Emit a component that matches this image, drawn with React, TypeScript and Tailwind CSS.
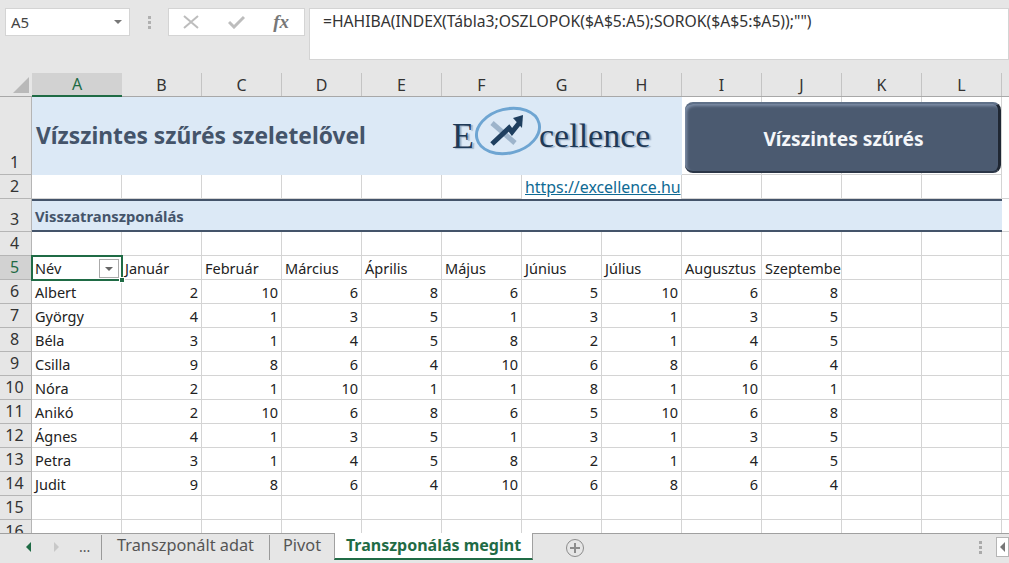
const columns = ["A", "B", "C", "D", "E", "F", "G", "H", "I", "J", "K", "L"];
const months = ["Január", "Február", "Március", "Április", "Május", "Június", "Július", "Augusztus", "Szeptember"];

const people: [string, number[]][] = [
  ["Albert", [2, 10, 6, 8, 6, 5, 10, 6, 8]],
  ["György", [4, 1, 3, 5, 1, 3, 1, 3, 5]],
  ["Béla", [3, 1, 4, 5, 8, 2, 1, 4, 5]],
  ["Csilla", [9, 8, 6, 4, 10, 6, 8, 6, 4]],
  ["Nóra", [2, 1, 10, 1, 1, 8, 1, 10, 1]],
  ["Anikó", [2, 10, 6, 8, 6, 5, 10, 6, 8]],
  ["Ágnes", [4, 1, 3, 5, 1, 3, 1, 3, 5]],
  ["Petra", [3, 1, 4, 5, 8, 2, 1, 4, 5]],
  ["Judit", [9, 8, 6, 4, 10, 6, 8, 6, 4]],
];

const RowHead = ({ n, active }: { n: number; active?: boolean }) => (
  <div
    className={`w-[32px] shrink-0 flex items-end justify-center pr-[2px] border-r border-b border-[#b5b5b5] text-[16px] leading-[23px] ${
      active ? "bg-[#d2d2d2] text-[#1f6b45]" : "bg-[#e6e6e6] text-[#333]"
    }`}
  >
    {n}
  </div>
);

const Cell = ({ w = "w-[80px]", children, right }: { w?: string; children?: React.ReactNode; right?: boolean }) => (
  <div
    className={`${w} shrink-0 h-full border-r border-b border-[#d4d4d4] px-[3px] flex items-end overflow-hidden whitespace-nowrap leading-[22px] ${
      right ? "justify-end" : ""
    }`}
  >
    {children}
  </div>
);

const EmptyRow = ({ n }: { n: number }) => (
  <div className="flex h-[24px]">
    <RowHead n={n} />
    {columns.map((c) => (
      <Cell key={c} w={c === "A" ? "w-[90px]" : "w-[80px]"} />
    ))}
    <Cell />
  </div>
);

const Logo = () => (
  <div className="relative w-[206px] h-[60px] shrink-0 font-['Liberation_Serif',serif] text-[#1f3a57] [text-shadow:2px_1px_1px_#9fb2c8]">
    <span className="absolute left-0 top-[8px] text-[36px] leading-[44px]">E</span>
    <svg className="absolute left-[22px] top-[-1px]" width="68" height="52" viewBox="0 0 68 52" fill="none">
      <ellipse cx="34" cy="26" rx="32" ry="22" transform="rotate(-14 34 26)" stroke="#6ea5d2" strokeWidth="3" />
      <path d="M18 18 L41 38" stroke="#9db4cb" strokeWidth="5" />
      <path d="M18 39 L35 23 L38 27 L46 17" stroke="#1f3f5f" strokeWidth="5" />
      <path d="M39 13 L49 10 L48 23 Z" fill="#1f3f5f" />
    </svg>
    <span className="absolute left-[87px] top-[8px] text-[34px] leading-[44px]">cellence</span>
  </div>
);

const App = () => {
  return (
    <div className="relative w-[1009px] h-[563px] overflow-hidden bg-white font-['Noto_Sans',sans-serif] text-[14.5px] text-[#222]">
      {/* Formula bar */}
      <div className="h-[73px] bg-[#e6e6e6] flex items-start pt-[8px] pl-[5px]">
        <div className="w-[125px] h-[28px] bg-white border border-[#d4d4d4] flex items-center justify-between pl-[5px] pr-[7px] text-[15px] text-[#444]">
          A5
          <span className="w-0 h-0 border-x-[4px] border-x-transparent border-t-[4px] border-t-[#777]" />
        </div>
        <div className="w-[38px] h-[28px] flex flex-col items-center justify-center gap-[2px]">
          <span className="w-[3px] h-[3px] bg-[#b0b0b0]" />
          <span className="w-[3px] h-[3px] bg-[#b0b0b0]" />
          <span className="w-[3px] h-[3px] bg-[#b0b0b0]" />
        </div>
        <div className="w-[137px] h-[28px] bg-white border border-[#d4d4d4] flex items-center justify-between pl-[14px] pr-[15px]">
          <svg width="16" height="14" viewBox="0 0 16 14" fill="none" stroke="#bdbdbd" strokeWidth="2">
            <path d="M1 1 L15 13 M15 1 L1 13" />
          </svg>
          <svg width="17" height="14" viewBox="0 0 17 14" fill="none" stroke="#bdbdbd" strokeWidth="3">
            <path d="M1 7 L6 12 L16 2" />
          </svg>
          <span className="font-['Liberation_Serif',serif] italic font-bold text-[19px] text-[#777]">fx</span>
        </div>
        <div className="ml-[4px] flex-1 h-[52px] bg-white border border-[#d4d4d4] pl-[13px] pt-[1px] text-[15.7px] text-[#333]">
          =HAHIBA(INDEX(Tábla3;OSZLOPOK($A$5:A5);SOROK($A$5:$A5));"")
        </div>
      </div>

      {/* Column headers */}
      <div className="flex h-[24px] bg-[#e6e6e6] border-b border-[#a8a8a8] text-[16px] text-[#333]">
        <div className="w-[32px] shrink-0 relative">
          <span className="absolute right-[3px] bottom-[3px] w-0 h-0 border-l-[16px] border-l-transparent border-b-[16px] border-b-[#b9b9b9]" />
        </div>
        {columns.map((c) => (
          <div
            key={c}
            className={`shrink-0 flex items-center justify-center ${
              c === "A"
                ? "w-[90px] bg-[#d2d2d2] text-[#1f6b45] border-b-2 border-[#1f6b45] h-[24px]"
                : "w-[80px] border-r border-[#c4c4c4]"
            }`}
          >
            {c}
          </div>
        ))}
      </div>

      {/* Row 1 */}
      <div className="flex h-[78px]">
        <RowHead n={1} />
        <div className="w-[650px] shrink-0 bg-[#dce9f6] flex items-center justify-between pr-[24px]">
          <span className="pl-[4px] text-[22.75px] font-bold text-[#44546a]">Vízszintes szűrés szeletelővel</span>
          <Logo />
        </div>
        <Cell />
        <Cell />
        <Cell />
        <Cell />
      </div>

      {/* Row 2 */}
      <div className="flex h-[24px]">
        <RowHead n={2} />
        <Cell w="w-[90px]" />
        <Cell />
        <Cell />
        <Cell />
        <Cell />
        <Cell />
        <div className="w-[160px] shrink-0 border-r border-[#d4d4d4] px-[3px] flex items-end leading-[23px] text-[15.9px] text-[#0f6a94] underline whitespace-nowrap">
          https://excellence.hu
        </div>
        <Cell />
        <Cell />
        <Cell />
        <Cell />
        <Cell />
      </div>

      {/* Row 3 */}
      <div className="flex h-[33px]">
        <RowHead n={3} />
        <div className="w-[970px] shrink-0 bg-[#dce9f6] border-y-2 border-[#44546a] flex items-center pl-[3px] pt-[1px] text-[14.8px] font-bold text-[#44546a]">
          Visszatranszponálás
        </div>
        <Cell />
      </div>

      <EmptyRow n={4} />

      {/* Row 5 */}
      <div className="flex h-[24px]">
        <RowHead n={5} active />
        <Cell w="w-[90px]">Név</Cell>
        {months.map((m) => (
          <Cell key={m}>{m}</Cell>
        ))}
        <Cell />
        <Cell />
        <Cell />
      </div>

      {/* Data rows */}
      {people.map(([name, values], i) => (
        <div key={name} className="flex h-[24px]">
          <RowHead n={i + 6} />
          <Cell w="w-[90px]">{name}</Cell>
          {values.map((v, j) => (
            <Cell key={j} right>
              {v}
            </Cell>
          ))}
          <Cell />
          <Cell />
          <Cell />
        </div>
      ))}

      <EmptyRow n={15} />
      <EmptyRow n={16} />

      {/* Shape button over row 1 */}
      <div className="absolute left-[685px] top-[102px] w-[316px] h-[71px] rounded-[8px] bg-[#4b5a70] border-t-2 border-[#5f7088] border-r-[3px] border-r-[#1f2733] border-b-2 border-b-[#2b3647] shadow-[inset_2px_2px_3px_#7d8da6] flex items-center justify-center pl-[4px] pt-[3px] text-[19.2px] font-bold text-[#f4f6f9]">
        Vízszintes szűrés
      </div>

      {/* Selected cell A5 */}
      <div className="absolute left-[31px] top-[255px] w-[92px] h-[26px] border-2 border-[#1f6b45]">
        <div className="absolute right-[2px] top-[2px] w-[20px] h-[19px] bg-white border border-[#aaaaaa] flex items-center justify-center">
          <span className="w-0 h-0 border-x-[4px] border-x-transparent border-t-[4px] border-t-[#666]" />
        </div>
        <span className="absolute right-[-4px] bottom-[-4px] w-[6px] h-[6px] bg-[#1f6b45] border border-white" />
      </div>

      {/* Sheet tabs */}
      <div className="absolute left-0 right-0 bottom-0 h-[30px] bg-[#e6e6e6] border-t border-[#a0a0a0] flex items-start text-[#555]">
        <div className="w-[102px] h-[25px] flex items-center shrink-0 pl-[26px] border-r border-[#9a9a9a] mt-[1px] pb-[2px]">
          <span className="w-0 h-0 border-y-[5px] border-y-transparent border-r-[5px] border-r-[#1f6b45]" />
          <span className="ml-[23px] w-0 h-0 border-y-[5px] border-y-transparent border-l-[5px] border-l-[#c8c8c8]" />
          <span className="ml-[20px] text-[14px] leading-none">...</span>
        </div>
        <div className="w-[168px] h-[25px] flex items-center justify-center shrink-0 border-r border-[#9a9a9a] mt-[1px] pb-[4px] text-[16.3px]">
          Transzponált adat
        </div>
        <div className="w-[64px] h-[25px] flex items-center justify-center shrink-0 mt-[1px] pb-[4px] text-[16.3px]">Pivot</div>
        <div className="w-[199px] h-[27px] shrink-0 bg-white border-x border-[#a0a0a0] border-b-2 border-b-[#1f6b45] mt-[-1px] pb-[2px] flex items-center justify-center text-[16px] font-bold text-[#1f6b45]">
          Transzponálás megint
        </div>
        <svg className="ml-[32px] mt-[4px]" width="20" height="20" viewBox="0 0 20 20" fill="none" stroke="#8c8c8c">
          <circle cx="10" cy="10" r="8.5" />
          <path d="M10 5 V15 M5 10 H15" strokeWidth="2" />
        </svg>
        <div className="ml-auto flex items-center h-[26px]">
          <div className="flex flex-col gap-[2px] mr-[14px]">
            <span className="w-[3px] h-[3px] bg-[#aaa]" />
            <span className="w-[3px] h-[3px] bg-[#aaa]" />
            <span className="w-[3px] h-[3px] bg-[#aaa]" />
          </div>
          <div className="w-[13px] h-[20px] bg-white border border-[#b5b5b5] flex items-center justify-center">
            <span className="w-0 h-0 border-y-[5px] border-y-transparent border-r-[5px] border-r-[#777]" />
          </div>
        </div>
      </div>
    </div>
  );
};

export default App;
